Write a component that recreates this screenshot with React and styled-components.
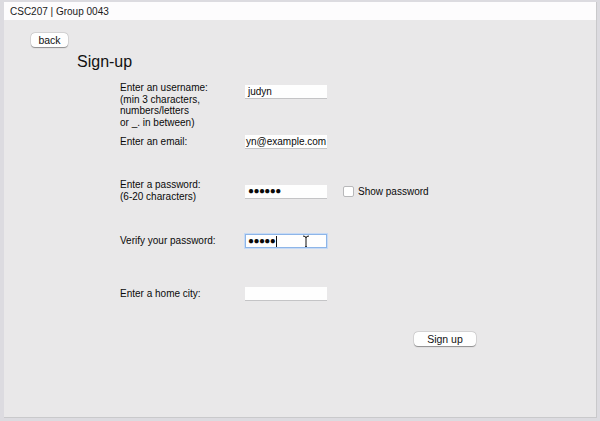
import React from "react";
import styled, { createGlobalStyle } from "styled-components";

const Global = createGlobalStyle`
  html, body { margin: 0; padding: 0; }
  body { width: 600px; height: 421px; overflow: hidden; background: #dedde0; }
  #root { width: 600px; height: 421px; }
`;

const Desk = styled.div`
  width: 600px;
  height: 421px;
  box-sizing: border-box;
  padding: 2px 3px 3px 4px;
  background: #dcdbe0;
  display: flex;
`;

const Win = styled.div`
  flex: 1;
  display: flex;
  flex-direction: column;
  background: #e9e8e9;
  border-right: 1px solid #c9c9cb;
  border-bottom: 1px solid #c9c9cb;
  font-family: "Liberation Sans", Arial, sans-serif;
  color: #0a0a0a;
`;

const TitleBar = styled.div`
  height: 18px;
  background: #fdfcfd;
  display: flex;
  align-items: center;
  padding-left: 6px;
  font-size: 10px;
  color: #1a1a1a;
`;

const Body = styled.div`
  flex: 1;
  padding: 13px 0 0 27px;
  display: flex;
  flex-direction: column;
  align-items: flex-start;
`;

const Button = styled.button`
  font-family: "Liberation Sans", Arial, sans-serif;
  font-size: 10.5px;
  color: #111;
  background: #fefefe;
  border: none;
  border-radius: 4px;
  box-shadow: 0 0.5px 1px rgba(0,0,0,0.35), 0 0 0 0.5px rgba(0,0,0,0.12);
  width: ${(p) => p.$w}px;
  height: 14px;
  padding: 0;
  line-height: 14px;
`;

const Heading = styled.div`
  margin: 6px 0 0 46px;
  font-size: 16px;
  line-height: 18px;
  color: #111;
`;

const Form = styled.div`
  margin-left: 89px;
  display: flex;
  flex-direction: column;
`;

const Row = styled.div`
  display: flex;
  align-items: ${(p) => p.$align || "center"};
  margin-top: ${(p) => p.$mt}px;
`;

const Label = styled.div`
  width: 125px;
  font-size: 10px;
  line-height: 11.5px;
  margin-top: ${(p) => p.$mt || 0}px;
`;

const Field = styled.div`
  width: 82px;
  height: 14px;
  box-sizing: border-box;
  background: #fefefe;
  border-bottom: 1px solid #c4c4c6;
  font-size: 10px;
  line-height: 13px;
  padding: 0 0 0 ${(p) => (p.$overflow ? 1 : 3)}px;
  white-space: nowrap;
  overflow: hidden;
  position: relative;
  display: flex;
  align-items: center;
  ${(p) =>
    p.$focus &&
    `
    border: 1px solid #8db5e8;
    box-shadow: 0 0 0 1px #c6daf5;
    padding-left: 2px;
  `}
`;

const Dots = styled.span`
  font-size: 10px;
  letter-spacing: -0.6px;
  position: relative;
  top: -0.5px;
`;

const Caret = styled.span`
  display: inline-block;
  width: 1px;
  height: 11px;
  background: #111;
  margin-left: 1px;
`;

const IBeam = styled.svg`
  position: absolute;
  left: 56px;
  top: 0px;
`;

const Check = styled.label`
  display: flex;
  align-items: center;
  margin-left: 16px;
  font-size: 10px;
  gap: 4px;
`;

const Box = styled.span`
  width: 9px;
  height: 9px;
  background: #fff;
  border: 1px solid #b8b8ba;
  border-radius: 2px;
`;

const Footer = styled.div`
  margin: 28px 0 0 383px;
`;

export default function App() {
  return (
    <>
      <Global />
      <Desk>
        <Win>
          <TitleBar>CSC207 | Group 0043</TitleBar>
          <Body>
            <Button $w={37}>back</Button>
            <Heading>Sign-up</Heading>
            <Form>
              <Row $align="flex-start" $mt={14}>
                <Label $mt={-3}>
                  Enter an username:
                  <br />
                  (min 3 characters,
                  <br />
                  numbers/letters
                  <br />
                  or _. in between)
                </Label>
                <Field>judyn</Field>
              </Row>
              <Row $mt={7}>
                <Label>Enter an email:</Label>
                <Field $overflow>yn@example.com</Field>
              </Row>
              <Row $mt={32}>
                <Label $mt={-2}>
                  Enter a password:
                  <br />
                  (6-20 characters)
                </Label>
                <Field>
                  <Dots>●●●●●●</Dots>
                </Field>
                <Check>
                  <Box />
                  Show password
                </Check>
              </Row>
              <Row $mt={32}>
                <Label>Verify your password:</Label>
                <Field $focus>
                  <Dots>●●●●●</Dots>
                  <Caret />
                  <IBeam width="8" height="14" viewBox="0 0 8 14">
                    <path d="M1 1 Q4 1 4 3 L4 11 Q4 13 1 13 M7 1 Q4 1 4 3 M4 11 Q4 13 7 13" fill="none" stroke="#111" strokeWidth="1" />
                  </IBeam>
                </Field>
              </Row>
              <Row $mt={39}>
                <Label>Enter a home city:</Label>
                <Field />
              </Row>
            </Form>
            <Footer>
              <Button $w={62}>Sign up</Button>
            </Footer>
          </Body>
        </Win>
      </Desk>
    </>
  );
}
